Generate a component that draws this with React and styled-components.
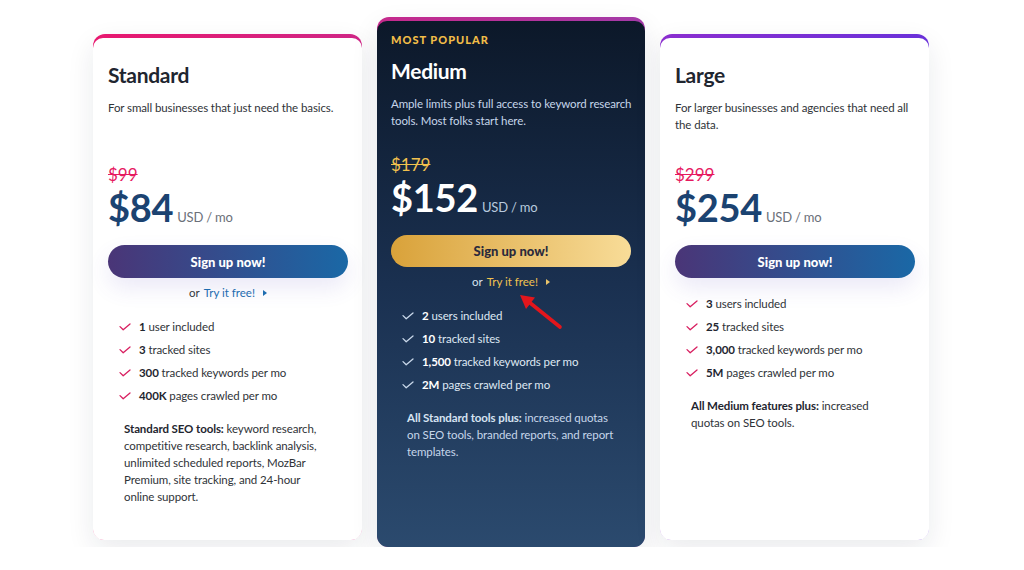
import React from 'react';
import styled, { createGlobalStyle, css } from 'styled-components';

const GlobalStyle = createGlobalStyle`
  body {
    margin: 0;
    background: #ffffff;
    font-family: Lato, "Open Sans", "Liberation Sans", sans-serif;
    -webkit-font-smoothing: antialiased;
  }
`;

const plans = [
  {
    name: 'Standard',
    tone: 'light',
    band: 'linear-gradient(90deg, #e8186f, #cf2686)',
    desc: 'For small businesses that just need the basics.',
    descHeight: 66,
    oldPrice: '$99',
    price: '$84',
    tryFree: true,
    features: [
      ['1', 'user included'],
      ['3', 'tracked sites'],
      ['300', 'tracked keywords per mo'],
      ['400K', 'pages crawled per mo'],
    ],
    lead: 'Standard SEO tools:',
    more: 'keyword research, competitive research, backlink analysis, unlimited scheduled reports, MozBar Premium, site tracking, and 24-hour online support.',
  },
  {
    name: 'Medium',
    tone: 'dark',
    popular: true,
    band: 'linear-gradient(90deg, #c62a8c, #a33aa8)',
    desc: 'Ample limits plus full access to keyword research tools. Most folks start here.',
    descHeight: 60,
    oldPrice: '$179',
    price: '$152',
    tryFree: true,
    features: [
      ['2', 'users included'],
      ['10', 'tracked sites'],
      ['1,500', 'tracked keywords per mo'],
      ['2M', 'pages crawled per mo'],
    ],
    lead: 'All Standard tools plus:',
    more: 'increased quotas on SEO tools, branded reports, and report templates.',
  },
  {
    name: 'Large',
    tone: 'light',
    band: 'linear-gradient(90deg, #8b2ecf, #6a31d9)',
    desc: 'For larger businesses and agencies that need all the data.',
    descHeight: 66,
    oldPrice: '$299',
    price: '$254',
    tryFree: false,
    features: [
      ['3', 'users included'],
      ['25', 'tracked sites'],
      ['3,000', 'tracked keywords per mo'],
      ['5M', 'pages crawled per mo'],
    ],
    lead: 'All Medium features plus:',
    more: 'increased quotas on SEO tools.',
  },
];

const Check = ({ color }) => (
  <svg width="12" height="8" viewBox="0 0 12 8">
    <polyline points="1,3.6 4.2,6.8 11,1" fill="none" stroke={color} strokeWidth="1.3" strokeLinecap="round" strokeLinejoin="round" />
  </svg>
);

const Caret = ({ color }) => (
  <svg width="4" height="6" viewBox="0 0 4 6">
    <polygon points="0,0 4,3 0,6" fill={color} />
  </svg>
);

export default function App() {
  return (
    <>
      <GlobalStyle />
      <Page>
        {plans.map((plan) => {
          const dark = plan.tone === 'dark';
          return (
            <Frame key={plan.name} $band={plan.band} $featured={dark}>
              <Body $dark={dark}>
                {plan.popular && <Popular>MOST POPULAR</Popular>}
                <Title $dark={dark}>{plan.name}</Title>
                <Desc $dark={dark} $height={plan.descHeight}>{plan.desc}</Desc>
                <OldPrice $dark={dark}>{plan.oldPrice}</OldPrice>
                <PriceRow>
                  <Price $dark={dark}>{plan.price}</Price>
                  <Unit $dark={dark}>USD / mo</Unit>
                </PriceRow>
                <SignUp $dark={dark}>Sign up now!</SignUp>
                {plan.tryFree && (
                  <TryFree $dark={dark}>
                    or <TryLink $dark={dark}>Try it free!</TryLink>
                    <Caret color={dark ? '#e9c46a' : '#1d6cb0'} />
                  </TryFree>
                )}
                <Features>
                  {plan.features.map(([num, text]) => (
                    <Feature key={text} $dark={dark}>
                      <Check color={dark ? '#c9d8ea' : '#d81f60'} />
                      <span><b>{num}</b> {text}</span>
                    </Feature>
                  ))}
                </Features>
                <More $dark={dark}>
                  <b>{plan.lead}</b> {plan.more}
                </More>
              </Body>
              {dark && (
                <Pointer width="50" height="44" viewBox="0 0 50 44">
                  <line x1="45" y1="38" x2="14" y2="13" stroke="#e3161c" strokeWidth="3.6" strokeLinecap="round" />
                  <polygon points="5,6 20,8.5 11,20" fill="#e3161c" />
                </Pointer>
              )}
            </Frame>
          );
        })}
      </Page>
    </>
  );
}

const Page = styled.div`
  display: flex;
  justify-content: flex-start;
  align-items: flex-start;
  gap: 15px;
  padding: 17px 0 0 93px;
`;

const Frame = styled.div`
  position: relative;
  width: ${(p) => (p.$featured ? '268px' : '269px')};
  padding-top: 4px;
  border-radius: 12px;
  background: ${(p) => p.$band};
  box-shadow: 0 10px 28px rgba(20, 30, 60, 0.09);
  margin-top: ${(p) => (p.$featured ? '0' : '17px')};
`;

const Body = styled.div`
  box-sizing: border-box;
  height: ${(p) => (p.$dark ? '526px' : '502px')};
  padding: ${(p) => (p.$dark ? '12px' : '23px')} 8px 0 ${(p) => (p.$dark ? '14px' : '15px')};
  border-radius: 10px 10px 11px 11px;
  background: ${(p) => (p.$dark ? 'linear-gradient(180deg, #0c1829 0%, #1a3050 50%, #2b4a6e 100%)' : '#ffffff')};
`;

const Popular = styled.div`
  font-size: 11px;
  line-height: 14px;
  font-weight: 900;
  letter-spacing: 1px;
  color: #f1bd48;
  margin-bottom: 10px;
`;

const Title = styled.h2`
  margin: 0;
  font-size: 21px;
  line-height: 28px;
  font-weight: 700;
  letter-spacing: -0.3px;
  color: ${(p) => (p.$dark ? '#ffffff' : '#1f2630')};
`;

const Desc = styled.p`
  margin: 10px 0 0;
  height: ${(p) => p.$height}px;
  font-size: 11.5px;
  line-height: 17px;
  letter-spacing: -0.1px;
  color: ${(p) => (p.$dark ? '#c6d6ea' : '#2f3338')};
`;

const OldPrice = styled.div`
  font-size: 17px;
  line-height: 20px;
  text-decoration: line-through;
  color: ${(p) => (p.$dark ? '#f2c14e' : '#e6195f')};
`;

const PriceRow = styled.div`
  display: flex;
  align-items: baseline;
  gap: 4px;
  margin-top: 2px;
`;

const Price = styled.span`
  font-size: 38px;
  line-height: 40px;
  font-weight: 700;
  letter-spacing: -0.3px;
  color: ${(p) => (p.$dark ? '#ffffff' : '#1b4371')};
`;

const Unit = styled.span`
  font-size: 13px;
  letter-spacing: -0.2px;
  color: ${(p) => (p.$dark ? '#b8cade' : '#6b7079')};
`;

const SignUp = styled.button`
  display: block;
  width: 240px;
  height: ${(p) => (p.$dark ? '32px' : '33px')};
  margin-top: 18px;
  border: none;
  border-radius: 17px;
  font-family: inherit;
  font-size: 13px;
  font-weight: 900;
  cursor: pointer;
  ${(p) =>
    p.$dark
      ? css`
          background: linear-gradient(90deg, #d9a23a, #f8dc98);
          color: #2b2a3c;
        `
      : css`
          background: linear-gradient(90deg, #4a3577, #1a68a6);
          color: #ffffff;
          box-shadow: 0 10px 22px rgba(90, 70, 190, 0.12);
        `}
`;

const TryFree = styled.div`
  display: flex;
  justify-content: center;
  align-items: center;
  gap: 4px;
  width: 240px;
  margin-top: 6px;
  font-size: 11.5px;
  line-height: 17px;
  color: ${(p) => (p.$dark ? '#d7e2ef' : '#333840')};

  svg {
    margin-left: 4px;
  }
`;

const TryLink = styled.span`
  color: ${(p) => (p.$dark ? '#f1c24f' : '#1d6cb0')};
`;

const Features = styled.ul`
  list-style: none;
  margin: 14px 0 0;
  padding: 0 0 0 11px;
`;

const Feature = styled.li`
  display: flex;
  align-items: center;
  gap: 8px;
  height: 23px;
  font-size: 11.5px;
  letter-spacing: -0.1px;
  color: ${(p) => (p.$dark ? '#dfe8f3' : '#2f3338')};

  svg {
    flex: none;
  }

  b {
    font-weight: 700;
    color: ${(p) => (p.$dark ? '#ffffff' : '#1f2630')};
  }
`;

const More = styled.p`
  margin: 13px 0 0;
  padding: 0 22.5px 0 16px;
  font-size: 11.5px;
  line-height: 17px;
  letter-spacing: -0.1px;
  color: ${(p) => (p.$dark ? '#c6d6ea' : '#2f3338')};

  b {
    font-weight: 700;
    color: ${(p) => (p.$dark ? '#d6e3f2' : '#1f2630')};
  }
`;

const Pointer = styled.svg`
  position: absolute;
  left: 138px;
  top: 272px;
`;
